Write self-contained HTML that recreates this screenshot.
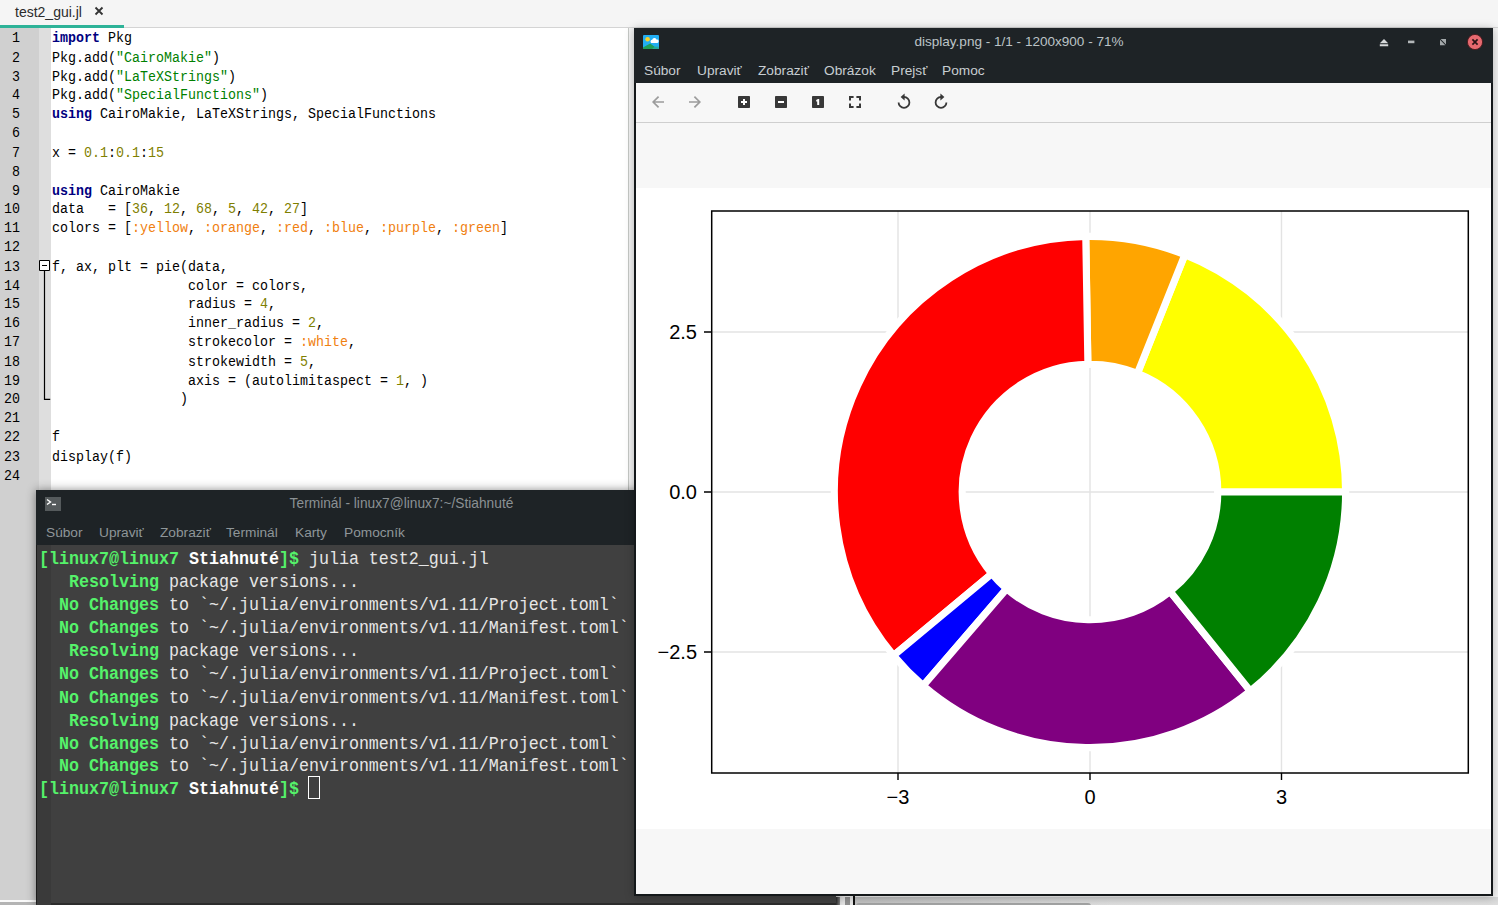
<!DOCTYPE html>
<html><head><meta charset="utf-8"><title>screen</title>
<style>
html,body{margin:0;padding:0}
body{width:1498px;height:905px;position:relative;overflow:hidden;background:#f4f4f4;font-family:"Liberation Sans",sans-serif}
.abs{position:absolute}
/* ---------- editor (Geany) ---------- */
#tabbar{left:0;top:0;width:1498px;height:27px;background:#f5f5f5;border-bottom:1px solid #d4d4d4}
#tabtxt{left:15px;top:4px;font-size:14px;color:#2b2b2b;line-height:17px}
#tabul{left:0;top:25px;width:124px;height:3px;background:#2eb398}
#ed{left:0;top:28px;width:628px;height:877px;background:#fff;border-right:1px solid #c6c9c6}
#gut{left:0;top:28px;width:39px;height:877px;background:#d0d0d0}
#fold{left:39px;top:28px;width:12px;height:877px;background:#dedede}
#nums,#code{font-family:"Liberation Mono",monospace;font-size:13.33px;line-height:16.814px;white-space:pre;color:#000;transform:scaleY(1.13);transform-origin:0 0}
#nums{left:0px;top:30.05px;width:20px;text-align:right}
#code{left:52px;top:30.05px}
#code div,#nums div{height:16.814px}
#code b.k{color:#00007f;font-weight:bold}
#code i{font-style:normal}
#code i.s{color:#008000}
#code i.n{color:#7f7f00}
#code i.y{color:#f08010}
/* ---------- terminal ---------- */
#term{left:36px;top:490px;width:800px;height:415px;background:#404040;box-shadow:0 0 9px rgba(0,0,0,.45);border-bottom:2px solid #2c2c2c;border-left:1px solid #1c1c1c;box-sizing:border-box}
#thead{left:-1px;top:0;width:800px;height:55px;background:#1e2326}
#ttitle{left:252px;top:6px;width:225px;text-align:center;font-size:13.75px;color:#8b9194;white-space:nowrap;line-height:16px}
#tmenu{left:-1px;top:34px;font-size:13.7px;color:#8f9699;white-space:nowrap;line-height:18px}
#tmenu span{position:absolute;top:0}
#tband{left:0px;top:55px;width:14px;height:360px;background:#3a3a3a}
#tbody{left:2px;top:57.6px;font-family:"Liberation Mono",monospace;font-size:16.67px;line-height:21.1px;white-space:pre;color:#e6e6e6;transform:scaleY(1.09);transform-origin:0 0}
#tbody div{height:21.1px}
#tbody b.g{color:#55f26a;font-weight:bold}
#tbody b.w{color:#fff;font-weight:bold}
.cur{position:absolute;left:271px;top:285.5px;width:12px;height:23.5px;border:1.2px solid #fff;box-sizing:border-box}
/* ---------- viewer ---------- */
#view{left:634px;top:28px;width:859px;height:868px;background:#f7f7f7;box-shadow:0 1px 9px rgba(0,0,0,.28);box-sizing:border-box;border:2px solid #14181a}
#vhead{left:-2px;top:-2px;width:859px;height:55px;background:#1e2326}
#vtitle{left:228px;top:3px;width:310px;text-align:center;font-size:13.55px;color:#bcc3c7;white-space:nowrap;line-height:18px}
#vmenu{left:-1px;top:31.6px;font-size:13.7px;color:#c8ced2;white-space:nowrap;line-height:18px}
#vmenu span{position:absolute;top:0}
#vtool{left:0;top:53px;width:855px;height:39px;background:#f7f7f7;border-bottom:1px solid #cfcfcf}
#vimg{left:0px;top:158px;width:855px;height:641px;background:#fff}
#bot{left:855px;top:897px;width:643px;height:8px;background:linear-gradient(#d6d7d7,#dedede)}
</style></head><body>

<div class="abs" id="tabbar"></div>
<div class="abs" id="tabtxt">test2_gui.jl</div>
<svg class="abs" style="left:94px;top:6px" width="10" height="10" viewBox="0 0 10 10"><path d="M1.5 1.5 L8.5 8.5 M8.5 1.5 L1.5 8.5" stroke="#333" stroke-width="1.8" fill="none"/></svg>
<div class="abs" id="tabul"></div>
<div class="abs" id="ed"></div>
<div class="abs" id="gut"></div>
<div class="abs" id="fold"></div>
<div class="abs" id="nums"><div>1</div><div>2</div><div>3</div><div>4</div><div>5</div><div>6</div><div>7</div><div>8</div><div>9</div><div>10</div><div>11</div><div>12</div><div>13</div><div>14</div><div>15</div><div>16</div><div>17</div><div>18</div><div>19</div><div>20</div><div>21</div><div>22</div><div>23</div><div>24</div></div>
<div class="abs" id="code"><div><b class="k">import</b> Pkg</div><div>Pkg.add(<i class="s">"CairoMakie"</i>)</div><div>Pkg.add(<i class="s">"LaTeXStrings"</i>)</div><div>Pkg.add(<i class="s">"SpecialFunctions"</i>)</div><div><b class="k">using</b> CairoMakie, LaTeXStrings, SpecialFunctions</div><div>&nbsp;</div><div>x = <i class="n">0.1</i>:<i class="n">0.1</i>:<i class="n">15</i></div><div>&nbsp;</div><div><b class="k">using</b> CairoMakie</div><div>data   = [<i class="n">36</i>, <i class="n">12</i>, <i class="n">68</i>, <i class="n">5</i>, <i class="n">42</i>, <i class="n">27</i>]</div><div>colors = [<i class="y">:yellow</i>, <i class="y">:orange</i>, <i class="y">:red</i>, <i class="y">:blue</i>, <i class="y">:purple</i>, <i class="y">:green</i>]</div><div>&nbsp;</div><div>f, ax, plt = pie(data,</div><div>                 color = colors,</div><div>                 radius = <i class="n">4</i>,</div><div>                 inner_radius = <i class="n">2</i>,</div><div>                 strokecolor = <i class="y">:white</i>,</div><div>                 strokewidth = <i class="n">5</i>,</div><div>                 axis = (autolimitaspect = <i class="n">1</i>, )</div><div>                )</div><div>&nbsp;</div><div>f</div><div>display(f)</div><div>&nbsp;</div></div>
<!-- fold marker -->
<svg class="abs" style="left:39px;top:259px" width="13" height="145" viewBox="0 0 13 145"><path d="M0.5 1.5 h10 v10 h-10 z" fill="#fff" stroke="#000" stroke-width="1"/><path d="M3 6.5 h5" stroke="#000" stroke-width="1"/><path d="M5.5 11.5 V140.4 H11.2" stroke="#000" stroke-width="1.2" fill="none"/></svg>
<div class="abs" id="bot"></div>
<div class="abs" style="left:855px;top:897px;width:260px;height:8px;background:linear-gradient(to right,rgba(0,0,0,.12),rgba(0,0,0,0))"></div>
<div class="abs" style="left:856px;top:902.6px;width:235px;height:6px;background:#a2a3a3;border-radius:3px"></div>
<div class="abs" style="left:0;top:900px;width:36px;height:5px;background:#b4b4b4;border-top:2px solid #fafafa;box-sizing:border-box"></div>
<div class="abs" style="left:836px;top:897px;width:4px;height:8px;background:linear-gradient(to right,#333,#888)"></div>
<div class="abs" style="left:840px;top:897px;width:13px;height:8px;background:#e6e6e6"></div><div class="abs" style="left:844.5px;top:897px;width:5.5px;height:8px;background:#909090"></div>
<div class="abs" style="left:853px;top:896px;width:2.2px;height:9px;background:#111"></div>

<div class="abs" id="term">
  <div class="abs" id="thead"></div>
  <svg class="abs" style="left:8px;top:7px" width="16" height="14" viewBox="0 0 16 14"><rect width="16" height="14" fill="#555a5c"/><path d="M2 2.5 L5.5 5 L2 7.5" stroke="#fff" stroke-width="1.4" fill="none"/><path d="M7 7.5 h4" stroke="#fff" stroke-width="1.4"/></svg>
  <div class="abs" id="ttitle">Terminál - linux7@linux7:~/Stiahnuté</div>
  <div class="abs" id="tmenu"><span style="left:10px">Súbor</span><span style="left:63px">Upraviť</span><span style="left:124px">Zobraziť</span><span style="left:190px">Terminál</span><span style="left:259px">Karty</span><span style="left:308px">Pomocník</span></div>
  <div class="abs" id="tband"></div>
  <div class="abs" id="tbody"><div><b class="g">[linux7@linux7</b> <b class="w">Stiahnuté</b><b class="g">]$</b> julia test2_gui.jl</div><div>   <b class="g">Resolving</b> package versions...</div><div>  <b class="g">No Changes</b> to `~/.julia/environments/v1.11/Project.toml`</div><div>  <b class="g">No Changes</b> to `~/.julia/environments/v1.11/Manifest.toml`</div><div>   <b class="g">Resolving</b> package versions...</div><div>  <b class="g">No Changes</b> to `~/.julia/environments/v1.11/Project.toml`</div><div>  <b class="g">No Changes</b> to `~/.julia/environments/v1.11/Manifest.toml`</div><div>   <b class="g">Resolving</b> package versions...</div><div>  <b class="g">No Changes</b> to `~/.julia/environments/v1.11/Project.toml`</div><div>  <b class="g">No Changes</b> to `~/.julia/environments/v1.11/Manifest.toml`</div><div><b class="g">[linux7@linux7</b> <b class="w">Stiahnuté</b><b class="g">]$</b> </div></div>
  <div class="cur"></div>
</div>

<div class="abs" id="view">
  <div class="abs" id="vhead"></div>
  <div class="abs" id="vtitle">display.png - 1/1 - 1200x900 - 71%</div>
  <div class="abs" id="vmenu"><span style="left:9px">Súbor</span><span style="left:62px">Upraviť</span><span style="left:123px">Zobraziť</span><span style="left:189px">Obrázok</span><span style="left:256px">Prejsť</span><span style="left:307px">Pomoc</span></div>
  <div class="abs" id="vtool"></div>
  <div class="abs" id="vimg"></div>
</div>


<!-- viewer chrome icons (page coords) -->
<svg class="abs" style="left:0;top:0" width="1498" height="130" viewBox="0 0 1498 130">
  <!-- app icon -->
  <g>
    <rect x="643" y="35" width="16" height="14" rx="1" fill="#22aef4"/>
    <path d="M643 49 V47.6 L646.5 45.6 L650.2 43.6 L654.6 46.8 L659 47.6 V49 Z" fill="#1f9e58"/><path d="M654.6 46.8 L656.6 45.6 L659 47 V49 H652 Z" fill="#27b0b8" opacity=".7"/>
    <circle cx="647.6" cy="39.2" r="2.3" fill="#f7d22a"/>
    <path d="M651.2 43 a1.8 1.8 0 0 1 1 -3.2 a2.2 2.2 0 0 1 4.2 -0.3 a1.8 1.8 0 0 1 1 3.5 z" fill="#fff"/>
  </g>
  <!-- window controls -->
  <path d="M1384 39 L1388.2 43.3 H1379.8 Z M1379.8 44.3 h8.4 v1.9 h-8.4 z" fill="#d6d9da"/>
  <rect x="1408" y="40.6" width="6.4" height="2.6" fill="#b3b7b9"/>
  <path d="M1440.6 39 H1446 V44.4 Z M1440 39.8 V45.2 H1445.4 Z" fill="#a3a8aa"/>
  <circle cx="1475" cy="42" r="7.6" fill="#e6696f" stroke="#4a181c" stroke-width="0.9"/>
  <path d="M1472.4 39.4 L1477.6 44.6 M1477.6 39.4 L1472.4 44.6" stroke="#2b1417" stroke-width="1.7" fill="none"/>
  <!-- toolbar -->
  <g stroke="#9c9c9c" stroke-width="1.7" fill="none">
    <path d="M664 102 H653.4 M658.6 96.6 L653.2 102 L658.6 107.4"/>
    <path d="M689 102 H699.6 M694.4 96.6 L699.8 102 L694.4 107.4"/>
  </g>
  <g fill="#383838">
    <rect x="738" y="96" width="12" height="12" rx="0.8"/>
    <rect x="775" y="96" width="12" height="12" rx="0.8"/>
    <rect x="812" y="96" width="12" height="12" rx="0.8"/>
  </g>
  <g fill="#fff">
    <path d="M741 101 h2 v-2 h2 v2 h2 v2 h-2 v2 h-2 v-2 h-2 z"/>
    <rect x="778" y="101" width="6" height="2"/>
    <path d="M816.2 100 L818 99 h1.2 v6 h-2 v-3.6 h-1 z"/>
  </g>
  <g stroke="#383838" stroke-width="2" fill="none">
    <path d="M850 100.6 V97 H853.6 M856.4 97 H860 V100.6 M860 103.4 V107 H856.4 M853.6 107 H850 V103.4"/>
  </g>
  <g stroke="#383838" stroke-width="1.8" fill="none">
    <path d="M904 97 A5.4 5.4 0 1 1 898.6 102.4"/>
    <path d="M941 97 A5.4 5.4 0 1 0 946.4 102.4"/>
  </g>
  <path d="M904.6 93.6 V100.4 L900.6 97 Z" fill="#383838"/>
  <path d="M940.4 93.6 V100.4 L944.4 97 Z" fill="#383838"/>
</svg>

<!-- plot, in page coordinates -->
<svg class="abs" style="left:0;top:0" width="1498" height="905" viewBox="0 0 1498 905">
  <g stroke="#e3e3e3" stroke-width="1.4" fill="none">
    <path d="M898 211V773M1090 211V773M1281.5 211V773M711 332H1468M711 492H1468M711 652H1468"/>
  </g>
  <path d="M1345.60,492.00 A255.60,255.60 0 0 0 1184.88,254.66 L1137.44,373.33 A127.80,127.80 0 0 1 1217.80,492.00 Z" fill="#ffff00" stroke="#fff" stroke-width="7.1" stroke-linejoin="miter"/>
<path d="M1184.88,254.66 A255.60,255.60 0 0 0 1085.77,236.43 L1087.89,364.22 A127.80,127.80 0 0 1 1137.44,373.33 Z" fill="#ffa500" stroke="#fff" stroke-width="7.1" stroke-linejoin="miter"/>
<path d="M1085.77,236.43 A255.60,255.60 0 0 0 893.60,655.58 L991.80,573.79 A127.80,127.80 0 0 1 1087.89,364.22 Z" fill="#ff0000" stroke="#fff" stroke-width="7.1" stroke-linejoin="miter"/>
<path d="M893.60,655.58 A255.60,255.60 0 0 0 923.20,685.67 L1006.60,588.84 A127.80,127.80 0 0 1 991.80,573.79 Z" fill="#0000ff" stroke="#fff" stroke-width="7.1" stroke-linejoin="miter"/>
<path d="M923.20,685.67 A255.60,255.60 0 0 0 1250.31,691.08 L1170.15,591.54 A127.80,127.80 0 0 1 1006.60,588.84 Z" fill="#800080" stroke="#fff" stroke-width="7.1" stroke-linejoin="miter"/>
<path d="M1250.31,691.08 A255.60,255.60 0 0 0 1345.60,492.00 L1217.80,492.00 A127.80,127.80 0 0 1 1170.15,591.54 Z" fill="#008000" stroke="#fff" stroke-width="7.1" stroke-linejoin="miter"/>

  <rect x="711.7" y="211" width="756.6" height="562" fill="none" stroke="#000" stroke-width="1.5"/>
  <g stroke="#000" stroke-width="1.4"><path d="M704 332h7M704 492h7M704 652h7M898 773v7M1090 773v7M1281.5 773v7"/></g>
  <g font-family="Liberation Sans, sans-serif" font-size="20" fill="#000">
    <text x="697" y="339" text-anchor="end">2.5</text>
    <text x="697" y="499" text-anchor="end">0.0</text>
    <text x="697" y="659" text-anchor="end">−2.5</text>
    <text x="898" y="804" text-anchor="middle">−3</text>
    <text x="1090" y="804" text-anchor="middle">0</text>
    <text x="1281.5" y="804" text-anchor="middle">3</text>
  </g>
</svg>
</body></html>
